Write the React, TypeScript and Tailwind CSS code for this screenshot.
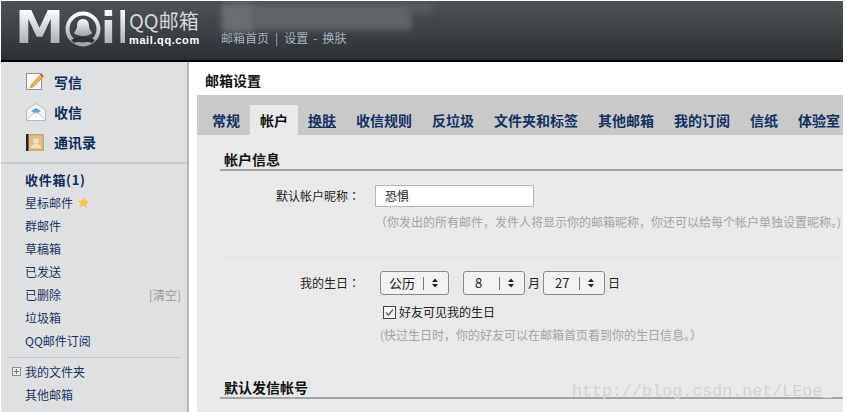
const cjk = { fontFamily: '"Noto Sans CJK SC", "Liberation Sans", sans-serif' };
const tc = { fontFamily: '"Noto Sans CJK TC", sans-serif' };

function Bell() {
  return (
    <svg width="36" height="36" viewBox="0 0 36 36" className="shrink-0 mt-[1px]">
      <defs>
        <linearGradient id="lg" x1="0" y1="0" x2="0" y2="1">
          <stop offset="0" stopColor="#ffffff" />
          <stop offset="1" stopColor="#9ea1a5" />
        </linearGradient>
      </defs>
      <circle cx="18" cy="18" r="15.5" fill="none" stroke="url(#lg)" strokeWidth="4" />
      <path d="M18 8c-4 0-6 3-6 7 0 3-2 5-3 7 1 2 6 3 9 3s8-1 9-3c-1-2-3-4-3-7 0-4-2-7-6-7z" fill="url(#lg)" />
      <path d="M6 29c7-4 17-4 24 0l-3 3c-5-2-13-2-18 0z" fill="#2f3236" />
    </svg>
  );
}

function Pencil() {
  return (
    <svg width="18" height="18" viewBox="0 0 18 18">
      <rect x="0.5" y="0.5" width="15" height="16" fill="#fbfbf6" stroke="#8f9193" />
      <path d="M5 12 L14 2 L17 4 L7 14 L4 15z" fill="#eeb53a" stroke="#a8761d" strokeWidth="0.5" />
      <path d="M14 2 L15 0.5 L18 3 L17 4z" fill="#d9533d" />
    </svg>
  );
}

function Env() {
  return (
    <svg width="20" height="18" viewBox="0 0 20 18">
      <path d="M0.5 7 L10 0.5 L19.5 7 V17.5 H0.5z" fill="#f3f4f6" stroke="#b4b8bd" />
      <path d="M5 8 L10 5 L15 8 L10 11z" fill="#6e9fd8" />
      <path d="M0.5 17 L8 10 H12 L19.5 17" fill="#fdfdfd" stroke="#c6c9cd" />
    </svg>
  );
}

function Contact() {
  return (
    <svg width="18" height="17" viewBox="0 0 18 17">
      <rect x="0" y="0" width="18" height="17" fill="#c9a86d" />
      <rect x="0" y="0" width="2.5" height="17" fill="#27231c" />
      <rect x="3" y="1.5" width="13.5" height="14" fill="#dcc08f" />
      <circle cx="10" cy="7" r="2.8" fill="#f2e2c2" />
      <path d="M5 14c.5-3 2.5-4 5-4s4.5 1 5 4z" fill="#f2e2c2" />
    </svg>
  );
}

function Star() {
  return (
    <svg width="13" height="13" viewBox="0 0 24 24">
      <path d="M12 1l3.4 7.3 7.9 1-5.8 5.4 1.5 7.9L12 17.8l-7 3.8 1.5-7.9L.7 9.3l7.9-1z" fill="#f7c552" stroke="#f0dca6" strokeWidth="1" />
    </svg>
  );
}

function Sel({ v, w, pad }: { v: string; w: string; pad: string }) {
  return (
    <div className={`${w} h-[24px] flex items-center border border-[#8a8a8a] rounded-[3px] bg-[#f2f2f2] text-[13px] text-[#222] shrink-0`}>
      <span className={`flex-1 ${pad}`}>{v}</span>
      <span className="w-px h-[13px] bg-[#777]" />
      <svg width="20" height="12" viewBox="0 0 20 12" className="mr-[3px] ml-[1px]">
        <path d="M7 5 L10 1.5 L13 5z M7 7 L10 10.5 L13 7z" fill="#222" />
      </svg>
    </div>
  );
}

const tabs = ['常规', '帐户', '换肤', '收信规则', '反垃圾', '文件夹和标签', '其他邮箱', '我的订阅', '信纸', '体验室'];
const folders = ['星标邮件', '群邮件', '草稿箱', '已发送', '已删除', '垃圾箱', 'QQ邮件订阅'];

export default function App() {
  return (
    <div className="w-[847px] h-[412px] bg-white overflow-hidden relative pt-px pl-px" style={cjk}>
      <div className="w-[842px] h-[411px] flex flex-col overflow-hidden relative">
        <header className="h-[61px] shrink-0 bg-gradient-to-b from-[#4f5257] via-[#3e4146] to-[#2c2f33] border-b-2 border-black flex items-start pl-[16px] pt-[9px] relative">
          <div className="flex items-center h-[36px] w-[108px] shrink-0" style={{ fontFamily: '"DejaVu Sans", sans-serif' }}>
            <span className="inline-block -ml-[2px] w-[50px] text-[44px] leading-[36px] font-bold bg-gradient-to-b from-white to-[#a7a9ad] bg-clip-text text-transparent origin-left scale-x-[1.12]">M</span>
            <Bell />
            <span className="text-[43px] leading-[36px] font-bold bg-gradient-to-b from-white to-[#a7a9ad] bg-clip-text text-transparent tracking-[1px] w-[24px]">il</span>
          </div>
          <div className="ml-[4px] w-[72px] shrink-0 flex flex-col">
            <span className="text-[20px] leading-[21px] text-[#d5d7da] whitespace-nowrap">QQ邮箱</span>
            <span className="text-[11px] leading-[12px] font-bold text-white tracking-[0.6px] mt-[3px] whitespace-nowrap" style={{ fontFamily: '"Liberation Sans", sans-serif' }}>mail.qq.com</span>
          </div>
          <div className="ml-[20px] mt-[21px] flex text-[12px] leading-[14px] text-[#a9b7c7] whitespace-nowrap">
            <span>邮箱首页</span>
            <span className="ml-[6px]">|</span>
            <span className="ml-[6px]">设置</span>
            <span className="ml-[5px]">-</span>
            <span className="ml-[5px]">换肤</span>
          </div>
          <div className="absolute left-[221px] top-[3px] w-[190px] h-[26px] bg-[#606368] blur-[3px]" />
          <div className="absolute left-[222px] top-[3px] w-[30px] h-[28px] bg-[#6a6d72] blur-[3px]" />
          <div className="absolute left-[410px] top-[2px] w-[22px] h-[10px] bg-[#585b60] blur-[3px]" />
        </header>
        <div className="flex flex-1 min-h-0">
          <aside className="w-[188px] shrink-0 bg-[#dfe0e2] border-r-2 border-[#b5b7ba] flex flex-col text-[#0f2c58]">
            <div className="pt-[5px] h-[102px] border-b-2 border-[#c8cacc] shrink-0">
              {[
                { l: '写信', i: <Pencil /> },
                { l: '收信', i: <Env /> },
                { l: '通讯录', i: <Contact /> },
              ].map((x) => (
                <div key={x.l} className="h-[30px] flex items-center pl-[25px]">
                  <span className="w-[28px] flex">{x.i}</span>
                  <span className="text-[14px] font-bold text-[#0f2c58]">{x.l}</span>
                </div>
              ))}
            </div>
            <div className="pt-[4px] px-[6px]">
              <div className="h-[23px] flex items-center pl-[18px] text-[13px] font-bold tracking-[0.7px] whitespace-nowrap">收件箱(1)</div>
              {folders.map((f) => (
                <div key={f} className="h-[23px] flex items-center pl-[18px] text-[12px] text-[#1c3560]">
                  <span>{f}</span>
                  {f === '星标邮件' && <span className="ml-[4px] flex"><Star /></span>}
                  {f === '已删除' && <span className="ml-auto text-[#9a9a9a]">[清空]</span>}
                </div>
              ))}
              <div className="h-px bg-[#c6c8ca] mt-[5px] mb-[2px]" />
              <div className="h-[23px] flex items-center text-[12px] text-[#1c3560]">
                <span className="w-[18px] flex pl-[5px]">
                  <svg width="9" height="9" viewBox="0 0 9 9">
                    <rect x="0.5" y="0.5" width="8" height="8" fill="#e8e8e8" stroke="#8e8e8e" />
                    <path d="M2 4.5H7M4.5 2V7" stroke="#777" />
                  </svg>
                </span>
                我的文件夹
              </div>
              <div className="h-[23px] flex items-center pl-[18px] text-[12px] text-[#1c3560]">其他邮箱</div>
            </div>
          </aside>
          <main className="flex-1 min-w-0 flex flex-col pl-[8px]">
            <h1 className="h-[33px] shrink-0 pl-[8px] pt-[9px] text-[14px] leading-[18px] font-bold text-[#111]">邮箱设置</h1>
            <nav className="h-[40px] shrink-0 bg-[#c9c9c9] pt-[10px] pl-[5px] flex items-stretch text-[14px] font-bold text-[#13315e] whitespace-nowrap">
              {tabs.map((t) => (
                <div key={t} className={`flex items-center px-[10px] ${t === '帐户' ? 'bg-[#e9e9e9] text-[#111]' : ''} ${t === '换肤' ? 'underline' : ''}`}>{t}</div>
              ))}
            </nav>
            <section className="flex-1 bg-[#e9e9e9] pl-[23px] overflow-hidden">
              <div className="h-[36px] flex flex-col justify-end">
                <div className="pl-[4px] mb-px text-[14px] leading-[18px] font-bold text-[#111]">帐户信息</div>
                <div className="h-[2px] bg-[#a5a5a5]" />
              </div>
              <div className="flex items-center mt-[14px]">
                <div className="w-[140px] text-right text-[12px] text-[#222] whitespace-nowrap">默认帐户昵称<span style={tc}>：</span></div>
                <div className="ml-[15px] w-[159px] h-[22px] bg-white border border-[#b5b5b5] flex items-center pl-[9px] text-[12px] text-[#222]">恐惧</div>
              </div>
              <div className="pl-[155px] mt-[6px] text-[12px] leading-[18px] text-[#a4a4a4] whitespace-nowrap">（你发出的所有邮件，发件人将显示你的邮箱昵称，你还可以给每个帐户单独设置昵称。)</div>
              <div className="h-px bg-[#e2e2e2] mt-[26px]" />
              <div className="flex items-center mt-[13px]">
                <div className="w-[140px] text-right text-[12px] text-[#222] whitespace-nowrap">我的生日<span style={tc}>：</span></div>
                <div className="ml-[20px] flex items-center text-[12px] text-[#222]">
                  <Sel v="公历" w="w-[69px]" pad="pl-[8px]" />
                  <div className="w-[14px]" />
                  <Sel v="8" w="w-[62px]" pad="pl-[11px]" />
                  <span className="mx-[3px]">月</span>
                  <Sel v="27" w="w-[62px]" pad="pl-[11px]" />
                  <span className="ml-[3px]">日</span>
                </div>
              </div>
              <div className="flex items-center pl-[163px] mt-[8px] text-[12px] leading-[18px] text-[#222]">
                <svg width="13" height="13" viewBox="0 0 13 13" className="shrink-0 mr-[3px]">
                  <rect x="0.5" y="0.5" width="12" height="12" fill="#f7f7f7" stroke="#444" />
                  <path d="M3 6.5 L5.5 9 L10 3.5" fill="none" stroke="#555" strokeWidth="1.3" />
                </svg>
                好友可见我的生日
              </div>
              <div className="pl-[160px] mt-[5px] text-[12px] leading-[18px] text-[#a4a4a4] whitespace-nowrap">(快过生日时，你的好友可以在邮箱首页看到你的生日信息。）</div>
              <div className="h-[55px] flex flex-col justify-end">
                <div className="pl-[4px] mb-px text-[14px] leading-[18px] font-bold text-[#111]">默认发信帐号</div>
                <div className="h-[2px] bg-[#a5a5a5]" />
              </div>
            </section>
          </main>
        </div>
        <div className="absolute left-[571px] top-[381px] text-[16.7px] leading-[20px] text-[#d2d2d2] whitespace-nowrap" style={{ fontFamily: '"Liberation Mono", monospace' }}>http://blog.csdn.net/LEoe_</div>
      </div>
    </div>
  );
}
